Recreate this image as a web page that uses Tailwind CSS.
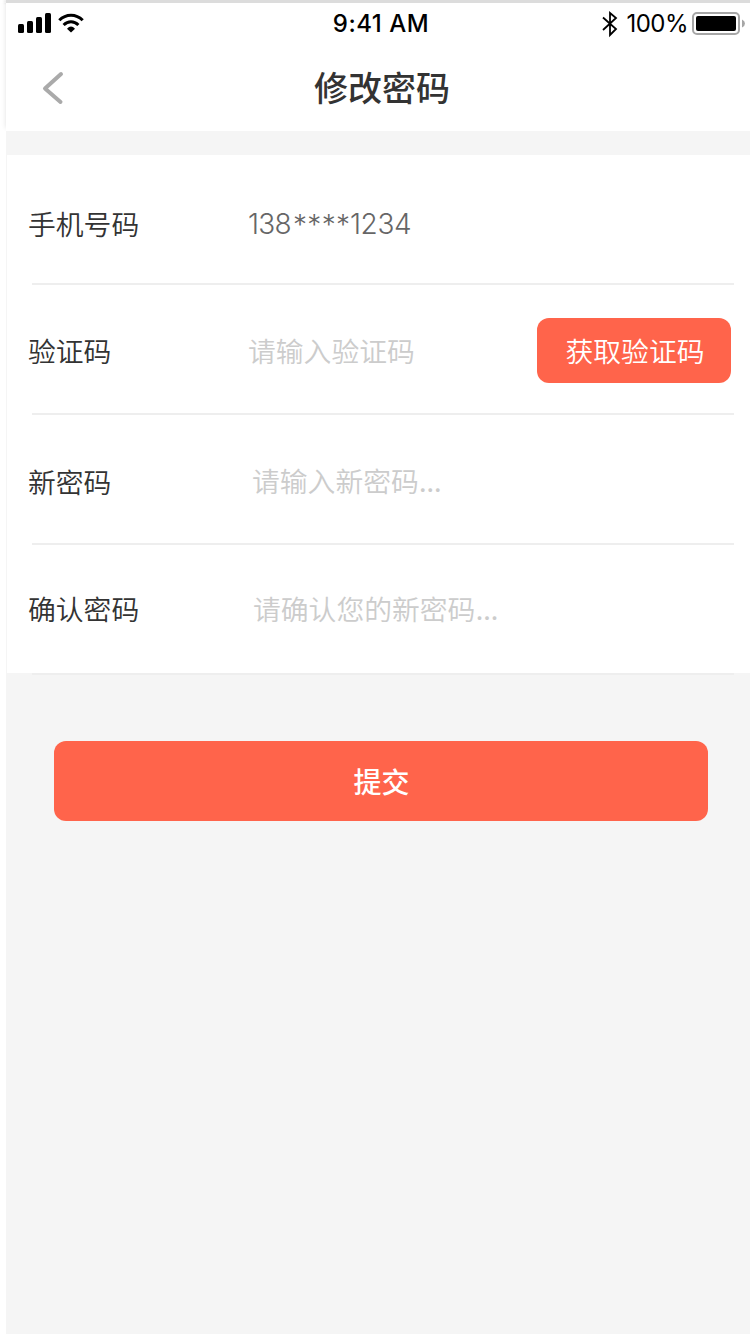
<!DOCTYPE html>
<html lang="zh-CN">
<head>
<meta charset="utf-8">
<title>修改密码</title>
<script src="https://cdn.jsdelivr.net/npm/@tailwindcss/browser@4"></script>
</head>
<body class="bg-white">
<div class="w-[750px] h-[1334px] overflow-hidden pl-1.5 font-['Noto_Sans_CJK_SC',sans-serif] text-[28px] leading-[40px] text-[#333]">
  <div class="h-[3px] bg-[#dcdcdc] shadow-[-2px_0_3px_#e4e4e4]"></div>
  <div class="h-[1331px] bg-[#f5f5f5] flex flex-col">
    <header class="h-32 shrink-0 bg-white shadow-[0_-3px_5px_rgba(0,0,0,0.12)] [clip-path:inset(0_0_0_-6px)]">
      <div class="h-10 grid grid-cols-3 items-center font-['Inter',sans-serif] text-2xl text-black">
        <div class="pl-3 flex items-center">
          <svg width="68" height="24" viewBox="18 11 68 24" class="block">
            <rect x="18" y="24" width="6" height="9" rx="1.5"/>
            <rect x="27" y="21" width="6" height="12" rx="1.5"/>
            <rect x="36" y="17" width="6" height="16" rx="1.5"/>
            <rect x="45" y="13" width="6" height="20" rx="1.5"/>
            <g fill="none" stroke="#000" stroke-width="3">
              <path d="M59.3 20.300C66 13.500 76 13.500 82.700 20.300"/>
              <path d="M63.600 25C68 20.600 74 20.600 78.400 25"/>
            </g>
            <path d="M67 28.700Q71 24.500 75 28.700L71 32.500Z"/>
          </svg>
        </div>
        <div class="text-center pl-1.5 font-medium tracking-[0.5px] whitespace-nowrap pt-px">9:41 AM</div>
        <div class="flex items-center justify-end pr-[5px]">
          <svg width="16" height="28" viewBox="0 0 16 28" class="block mt-px" fill="none" stroke="#000" stroke-width="1.800"><path d="M1 7.500L14 19L8 25V3L14 8L1 20"/></svg>
          <span class="ml-2 mr-[3px] tracking-[-0.500px] pt-0.5">100%</span>
          <svg width="54" height="24" viewBox="691 11 54 24" class="block">
            <rect x="693" y="13" width="46" height="21" rx="4" fill="none" stroke="#a6a6a6" stroke-width="2"/>
            <rect x="696" y="16" width="40" height="15" rx="2"/>
            <path d="M742 19.500Q745 21 745 23.500T742 27.500Z" fill="#a6a6a6"/>
          </svg>
        </div>
      </div>
      <div class="h-[88px] flex items-center">
        <svg width="24" height="34" viewBox="41 71 24 34" class="block ml-[35px] mt-0.5" fill="none" stroke="#aaa" stroke-width="4" stroke-linecap="round" stroke-linejoin="round"><path d="M61 74L45 88.500L60.500 102"/></svg>
        <h1 class="flex-1 pr-[51px] text-center text-[34px] font-medium">修改密码</h1>
      </div>
    </header>
    <main class="mt-6">
      <div class="ml-px h-[518px] bg-white">
        <div class="ml-[25px] w-[702px] h-[130px] border-b-2 border-[#eee] flex items-center pt-2">
          <div class="-ml-1 w-[219px] [font-weight:350] text-[27.800px]">手机号码</div>
          <div class="flex items-center font-['Inter',sans-serif] font-light text-[#666] pl-px pt-0.5"><span class="w-[45px] tracking-[-0.700px]">138</span><span class="w-[57px] tracking-[0.300px] pt-0.5 leading-8">****</span><span class="tracking-[-0.400px]">1234</span></div>
        </div>
        <div class="ml-[25px] w-[702px] h-[130px] border-b-2 border-[#eee] flex items-center">
          <div class="-ml-1 w-[220px] [font-weight:350] text-[27.800px] pt-0.5">验证码</div>
          <div class="flex-1 pt-0.5 [font-weight:350] text-[#ccc] text-[27.800px]">请输入验证码</div>
          <button class="mr-[3px] mt-[3px] w-[194px] h-[65px] rounded-xl bg-[#ff644b] text-white [font-weight:350] text-[27.800px] pl-0.5 pb-0.5">获取验证码</button>
        </div>
        <div class="ml-[25px] w-[702px] h-[130px] border-b-2 border-[#eee] flex items-center pt-1">
          <div class="-ml-1 w-[224px] [font-weight:350] text-[27.800px]">新密码</div>
          <div class="[font-weight:350] text-[#ccc] text-[27.800px]">请输入新密码<span class="font-['Inter',sans-serif] font-normal tracking-[-0.500px]">...</span></div>
        </div>
        <div class="ml-[25px] w-[702px] h-[130px] border-b-2 border-[#eee] flex items-center pb-0.5">
          <div class="-ml-1 w-[225px] [font-weight:350] text-[27.800px]">确认密码</div>
          <div class="[font-weight:350] text-[#ccc] text-[27.800px] pt-0.5">请确认您的新密码<span class="font-['Inter',sans-serif] font-normal tracking-[-0.500px]">...</span></div>
        </div>
      </div>
      <button class="block mt-[68px] ml-12 w-[654px] h-20 rounded-xl bg-[#ff644b] text-white text-[28px] font-medium pl-px">提交</button>
    </main>
  </div>
</div>
</body>
</html>
